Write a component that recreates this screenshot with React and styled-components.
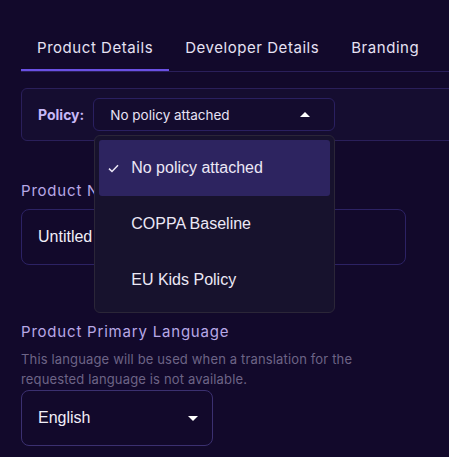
import React from 'react';
import styled, { createGlobalStyle } from 'styled-components';

const GlobalStyle = createGlobalStyle`
  html, body {
    margin: 0;
    background: #12092b;
    overflow: hidden;
  }
  body {
    font-family: Inter, 'Noto Sans', sans-serif;
    color: #e8e3f5;
  }
`;

const Page = styled.div`
  padding: 25px 0 0 21px;
  min-height: 457px;
  box-sizing: border-box;
`;

const TabBar = styled.div`
  display: flex;
  border-bottom: 1px solid #2a1f5a;
  width: 600px;
`;

const Tab = styled.div`
  height: 44px;
  display: flex;
  align-items: center;
  padding: 0 16px;
  font-size: 15px;
  letter-spacing: 0.55px;
  color: #e6e1f3;
  border-bottom: 2px solid ${(p) => (p.$active ? '#6a50e4' : 'transparent')};
`;

const PolicyBox = styled.div`
  margin-top: 16px;
  width: 560px;
  box-sizing: border-box;
  display: flex;
  align-items: center;
  gap: 9px;
  padding: 9px 16px;
  background: #150d30;
  border: 1px solid #2a1f5a;
  border-radius: 6px;
`;

const PolicyLabel = styled.span`
  font-size: 14px;
  font-weight: 700;
  color: #c7b8f6;
`;

const SelectWrap = styled.div`
  position: relative;
`;

const SmallSelect = styled.div`
  width: 242px;
  height: 33px;
  box-sizing: border-box;
  display: flex;
  align-items: center;
  justify-content: space-between;
  padding: 0 24px 0 16px;
  border: 1px solid #2a2060;
  border-radius: 6px;
  background: #140c2e;
  font-size: 13.5px;
  color: #e8e3f5;
`;

const Caret = styled.span`
  width: 0;
  height: 0;
  border-left: 5px solid transparent;
  border-right: 5px solid transparent;
  ${(p) =>
    p.$up
      ? 'border-bottom: 5px solid #ffffff;'
      : 'border-top: 5px solid #ffffff;'}
`;

const Menu = styled.div`
  position: absolute;
  top: calc(100% + 4px);
  left: 1px;
  width: 241px;
  box-sizing: border-box;
  padding: 4px;
  background: #17122d;
  border: 1px solid #2b2638;
  border-radius: 6px;
  z-index: 10;
`;

const MenuItem = styled.div`
  height: 56px;
  display: flex;
  align-items: center;
  padding-left: 9px;
  border-radius: 3px;
  background: ${(p) => (p.$selected ? '#2d2460' : 'transparent')};
  font-family: 'Liberation Sans', Arial, sans-serif;
  font-size: 16px;
  color: #ece8f6;
`;

const CheckSlot = styled.span`
  width: 23px;
  display: flex;
  align-items: center;
`;

const Field = styled.div`
  margin-top: ${(p) => p.$top}px;
`;

const Label = styled.div`
  font-size: 15px;
  line-height: 20px;
  letter-spacing: 0.8px;
  color: #b8a8e6;
`;

const Helper = styled.div`
  margin-top: 7px;
  width: 370px;
  font-size: 13px;
  line-height: 20px;
  letter-spacing: 0.15px;
  color: #6d6486;
`;

const TextBox = styled.div`
  margin-top: ${(p) => p.$gap}px;
  width: ${(p) => p.$width}px;
  height: 56px;
  box-sizing: border-box;
  display: flex;
  align-items: center;
  justify-content: space-between;
  padding: 0 14px 0 16px;
  border: ${(p) => (p.$strong ? '1.5px solid #3b3070' : '1px solid #2c2264')};
  border-radius: 8px;
  font-family: 'Liberation Sans', Arial, sans-serif;
  font-size: 16px;
  color: #f1eef8;
`;

const CheckIcon = () => (
  <svg width="11" height="9" viewBox="0 0 11 9" fill="none">
    <path d="M1 4.6 L4 7.5 L10 1.2" stroke="#ece8f6" strokeWidth="1.5" />
  </svg>
);

const policies = ['No policy attached', 'COPPA Baseline', 'EU Kids Policy'];

export default function App() {
  return (
    <Page>
      <GlobalStyle />
      <TabBar>
        <Tab $active>Product Details</Tab>
        <Tab>Developer Details</Tab>
        <Tab>Branding</Tab>
      </TabBar>

      <PolicyBox>
        <PolicyLabel>Policy:</PolicyLabel>
        <SelectWrap>
          <SmallSelect>
            No policy attached
            <Caret $up />
          </SmallSelect>
          <Menu>
            {policies.map((p, i) => (
              <MenuItem key={p} $selected={i === 0}>
                <CheckSlot>{i === 0 && <CheckIcon />}</CheckSlot>
                {p}
              </MenuItem>
            ))}
          </Menu>
        </SelectWrap>
      </PolicyBox>

      <Field $top={40}>
        <Label>Product Name</Label>
        <TextBox $gap={8} $width={385}>Untitled</TextBox>
      </Field>

      <Field $top={57}>
        <Label>Product Primary Language</Label>
        <Helper>
          This language will be used when a translation for the requested
          language is not available.
        </Helper>
        <TextBox $gap={1} $width={192} $strong>
          English
          <Caret />
        </TextBox>
      </Field>
    </Page>
  );
}
